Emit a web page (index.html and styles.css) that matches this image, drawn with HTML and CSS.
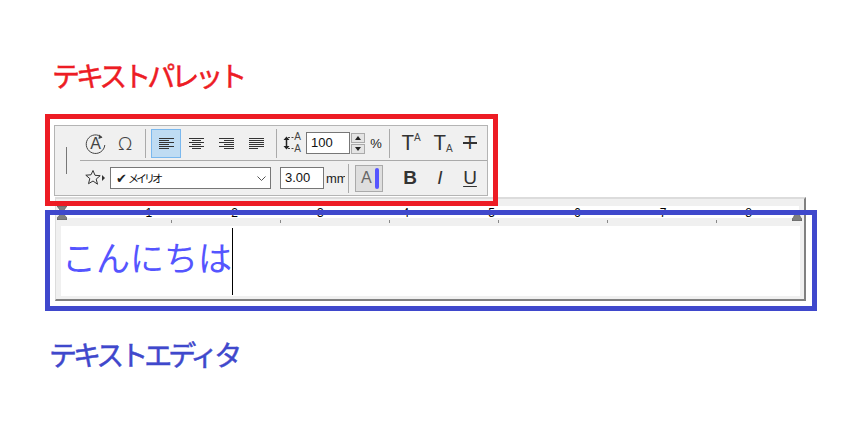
FILE: index.html
```html
<!DOCTYPE html>
<html lang="ja">

<head>
  <title>テキストパレット</title>
  <meta charset="utf-8">
  <link rel="stylesheet" href="styles.css">
</head>

<body>
  <div class="page">
    <h2 class="title title-red">テキストパレット</h2>

    <!-- Text palette -->
    <div class="palette">
      <div class="grip"><span class="grip-line"></span></div>
      <div class="rows">
        <div class="row row-top">
          <svg class="tool-a" width="21" height="21" viewBox="0 0 21 21">
            <path d="M17 4.500A9.300 9.300 0 1 0 19.800 12" fill="none" stroke="#444" stroke-width="1"/>
            <path d="M14 1.500l3.500 3-4 1.500z" fill="#444"/>
            <text x="10.500" y="16" text-anchor="middle" class="svg-a">A</text>
          </svg>
          <span class="tool-omega">Ω</span>
          <span class="sep sep-1"></span>
          <span class="align active">
            <svg width="15" height="11" viewBox="0 0 15 11"><path d="M0 .5h15M0 2.500h10M0 4.500h15M0 6.500h10M0 8.500h15M0 10.500h10" stroke="#333"/></svg>
          </span>
          <span class="align">
            <svg width="15" height="11" viewBox="0 0 15 11"><path d="M0 .5h15M3 2.500h9M0 4.500h15M3 6.500h9M0 8.500h15M3 10.500h9" stroke="#333"/></svg>
          </span>
          <span class="align">
            <svg width="15" height="11" viewBox="0 0 15 11"><path d="M0 .5h15M5 2.500h10M0 4.500h15M5 6.500h10M0 8.500h15M5 10.500h10" stroke="#333"/></svg>
          </span>
          <span class="align">
            <svg width="15" height="11" viewBox="0 0 15 11"><path d="M0 .5h15M0 2.500h15M0 4.500h15M0 6.500h15M0 8.500h15M0 10.500h9" stroke="#333"/></svg>
          </span>
          <span class="sep sep-2"></span>
          <svg class="tool-spacing" width="19" height="22" viewBox="0 0 19 22">
            <path d="M3.500 6v10" stroke="#222" stroke-width="1.500"/>
            <path d="M.5 8l3-3.500 3 3.500zM.5 14l3 3.500 3-3.500z" fill="#222"/>
            <path d="M5 5.500h6M5 16.500h6" stroke="#444" stroke-dasharray="2 1.500"/>
            <text x="14.500" y="8" text-anchor="middle" class="svg-small">A</text>
            <text x="14.500" y="20" text-anchor="middle" class="svg-small">A</text>
          </svg>
          <span class="field field-size">100</span>
          <span class="spinner">
            <span class="spin"><i class="arrow-up"></i></span>
            <span class="spin"><i class="arrow-down"></i></span>
          </span>
          <span class="percent">%</span>
          <span class="sep sep-3"></span>
          <span class="style-btn style-sup">T<small>A</small></span>
          <span class="style-btn style-sub">T<small>A</small></span>
          <span class="style-btn style-strike">T</span>
        </div>
        <div class="row">
          <svg class="tool-star" width="20" height="18" viewBox="0 0 20 18">
            <path d="M8 1.500l2 4.800 5.200.4-4 3.400 1.300 5.100L8 12l-4.500 2.700 1.300-5.100-4-3.400 5.200-.4z" fill="none" stroke="#333"/>
            <path d="M17 6l3 3-3 3z" fill="#333"/>
          </svg>
          <span class="font-select">
            <span class="font-name"><b class="check">✔</b>メイリオ</span>
            <svg width="9" height="5" viewBox="0 0 9 5"><path d="M.5.5l4 4 4-4" fill="none" stroke="#555"/></svg>
          </span>
          <span class="field field-height">3.00</span>
          <span class="unit">mm</span>
          <span class="sep sep-4"></span>
          <span class="color-btn">A<i class="color-bar"></i></span>
          <span class="format format-b">B</span>
          <span class="format format-i">I</span>
          <span class="format format-u">U</span>
        </div>
      </div>
    </div>

    <!-- Text editor -->
    <div class="editor">
      <div class="ruler">
        <span>1</span><span>2</span><span>3</span><span>4</span><span>5</span><span>6</span><span>7</span><span>8</span>
      </div>
      <div class="ticks">
        <i></i><i></i><i></i><i></i><i></i><i></i>
      </div>
      <div class="text-area">
        <span class="typed">こんにちは</span><span class="caret"></span>
      </div>
      <svg class="marker marker-left" width="10" height="14" viewBox="0 0 10 14">
        <path d="M0 0h10L6.500 5v2h-3V5zM3.500 8h3L10 12v2H0v-2z" fill="#808080" stroke="#444" stroke-width=".5"/>
      </svg>
      <svg class="marker marker-right" width="10" height="8" viewBox="0 0 10 8">
        <path d="M3.500 0h3l2.500 5 1 1v2H0V6l1-1z" fill="#808080" stroke="#444" stroke-width=".5"/>
      </svg>
    </div>

    <h2 class="title title-blue">テキストエディタ</h2>

    <div class="frame frame-red"></div>
    <div class="frame frame-blue"></div>
  </div>
</body>

</html>
```

FILE: styles.css
```css
body {
  margin: 0;
  background: white;
  font-family: "Noto Sans CJK JP", "Liberation Sans", sans-serif;
}

.page {
  position: relative;
  width: 851px;
  height: 423px;
  overflow: hidden;
}

.title {
  margin: 0;
  height: 34px;
  font-size: 28px;
  line-height: 34px;
  font-weight: 400;
  -webkit-text-stroke: 0.5px;
  letter-spacing: -4px;
  white-space: nowrap;
}

.title-red {
  color: #ed1c24;
  padding: 58px 0 0 52px;
}

.title-blue {
  color: #3f48cc;
  padding: 36px 0 0 49px;
}

/* palette */
.palette {
  display: flex;
  box-sizing: border-box;
  width: 434px;
  height: 71px;
  margin: 33px 0 0 54px;
  background-color: #f0f0f0;
  border: 1px solid #b4b4b4;
}

.grip {
  display: flex;
  align-items: center;
  width: 25px;
}

.grip-line {
  width: 1px;
  height: 27px;
  margin-left: 11px;
  background-color: #777;
}

.rows {
  flex: 1;
}

.row {
  display: flex;
  align-items: center;
  height: 34px;
  font-family: "Liberation Sans", sans-serif;
  font-size: 12px;
  color: #222;
}

.row-top {
  border-bottom: 1px solid #aaa;
}

.sep {
  width: 1px;
  height: 29px;
  background-color: #aaa;
}

.sep-1 {
  margin-left: 11px;
}

.sep-2 {
  margin-left: 5px;
}

.sep-3 {
  margin-left: 5px;
}

.sep-4 {
  margin-left: 3px;
}

.tool-a {
  margin-left: 5px;
}

.svg-a {
  font-family: "Liberation Sans", sans-serif;
  font-size: 16px;
  fill: #444;
}

.svg-small {
  font-family: "Liberation Sans", sans-serif;
  font-size: 10px;
  fill: #444;
}

.tool-omega {
  width: 18px;
  margin-left: 10px;
  font-family: "Noto Sans", sans-serif;
  font-size: 19px;
  font-weight: 300;
  text-align: center;
  color: #444;
}

.align {
  display: flex;
  align-items: center;
  justify-content: center;
  box-sizing: border-box;
  width: 30px;
  height: 29px;
}

.align.active {
  margin-left: 5px;
  background-color: #bfdcf3;
  border: 1px solid #7ab8ee;
}

.tool-spacing {
  margin-left: 6px;
}

.field {
  box-sizing: border-box;
  width: 44px;
  height: 22px;
  padding-left: 4px;
  font-size: 13px;
  line-height: 20px;
  color: #111;
  background-color: white;
  border: 1px solid #777;
}

.field-size {
  margin-left: 4px;
}

.field-height {
  margin-left: 9px;
}

.spinner {
  display: flex;
  flex-direction: column;
  gap: 1px;
  width: 14px;
  margin-left: 1px;
}

.spin {
  display: flex;
  align-items: center;
  justify-content: center;
  box-sizing: border-box;
  height: 10px;
  background-color: #e4e4e4;
  border: 1px solid #aaa;
}

.arrow-up {
  border: 3px solid transparent;
  border-top: 0;
  border-bottom: 4px solid #222;
}

.arrow-down {
  border: 3px solid transparent;
  border-bottom: 0;
  border-top: 4px solid #222;
}

.percent {
  width: 16px;
  margin-left: 3px;
  font-size: 13px;
  text-align: center;
}

.style-btn {
  display: flex;
  align-items: flex-start;
  justify-content: center;
  width: 28px;
  height: 24px;
  font-family: Roboto, sans-serif;
  font-size: 21px;
  font-weight: 400;
  line-height: 24px;
  color: #333;
}

.style-btn small {
  font-family: "Liberation Sans", sans-serif;
  font-size: 10px;
  font-weight: normal;
  line-height: 14px;
  color: #444;
}

.style-sup {
  margin-left: 7px;
}

.style-sub {
  margin-left: 4px;
}

.style-sub small {
  margin-top: 11px;
}

.style-strike {
  position: relative;
  width: 26px;
  font-size: 19px;
}

.style-strike::after {
  content: "";
  position: absolute;
  left: 6px;
  right: 6px;
  top: 11px;
  height: 2px;
  background-color: #333;
}

.tool-star {
  margin-left: 5px;
}

.font-select {
  display: flex;
  align-items: center;
  justify-content: space-between;
  box-sizing: border-box;
  width: 161px;
  height: 22px;
  margin-left: 5px;
  padding: 0 4px 0 5px;
  background-color: white;
  border: 1px solid #777;
}

.font-name {
  font-family: "Noto Sans CJK JP", sans-serif;
  font-size: 11px;
  letter-spacing: -3px;
  color: #111;
}

.check {
  margin-right: 1px;
  font-family: "DejaVu Sans", sans-serif;
  font-size: 13px;
  font-weight: normal;
  letter-spacing: 0;
  color: #222;
}

.unit {
  width: 19px;
  margin-left: 2px;
  overflow: hidden;
  font-size: 13px;
}

.color-btn {
  display: flex;
  align-items: center;
  box-sizing: border-box;
  width: 28px;
  height: 27px;
  margin-left: 6px;
  padding-left: 5px;
  font-size: 16px;
  color: #666;
  background-color: #dedede;
  border: 1px solid #aaa;
}

.color-bar {
  width: 4px;
  height: 21px;
  margin-left: 3px;
  border-radius: 2px;
  background-color: #5555ff;
}

.format {
  width: 28px;
  margin-left: 2px;
  font-size: 19px;
  text-align: center;
  color: #333;
}

.format-b {
  margin-left: 13px;
  font-weight: bold;
}

.format-i {
  font-style: italic;
  font-weight: normal;
}

.format-u {
  text-decoration: underline;
  text-underline-offset: 2px;
}

/* editor */
.editor {
  position: relative;
  box-sizing: border-box;
  width: 751px;
  height: 104px;
  margin: 1px 0 0 55px;
  background-color: #f0f0f0;
  border-top: 2px solid #dcdcdc;
  border-left: 1px solid #dcdcdc;
  border-right: 2px solid #808080;
  border-bottom: 2px solid #808080;
}

.ruler {
  display: flex;
  height: 12px;
  margin: 7px 5px 0 2px;
  padding-left: 48px;
  font-family: "Liberation Sans", sans-serif;
  font-size: 12px;
  line-height: 14px;
  background-color: white;
}

.ruler span {
  width: 85.7px;
  text-align: center;
}

.ticks {
  display: flex;
  gap: 108px;
  height: 8px;
  padding: 2px 0 0 115px;
  box-sizing: border-box;
}

.ticks i {
  width: 1px;
  height: 3px;
  background-color: #888;
}

.text-area {
  display: flex;
  align-items: center;
  height: 70px;
  margin: 0 4px 0 5px;
  padding-left: 1px;
  background-color: white;
}

.typed {
  padding-bottom: 8px;
  font-size: 34px;
  line-height: 58px;
  color: #5555ff;
}

.caret {
  width: 1px;
  height: 67px;
  background-color: black;
}

.marker {
  position: absolute;
}

.marker-left {
  left: 1px;
  top: 7px;
}

.marker-right {
  right: 2px;
  top: 14px;
}

/* callout frames */
.frame {
  position: absolute;
  box-sizing: border-box;
  border: 5px solid;
}

.frame-red {
  left: 45px;
  top: 114px;
  width: 453px;
  height: 92px;
  border-color: #ed1c24;
}

.frame-blue {
  left: 45px;
  top: 210px;
  width: 772px;
  height: 101px;
  border-color: #3f48cc;
}
```
